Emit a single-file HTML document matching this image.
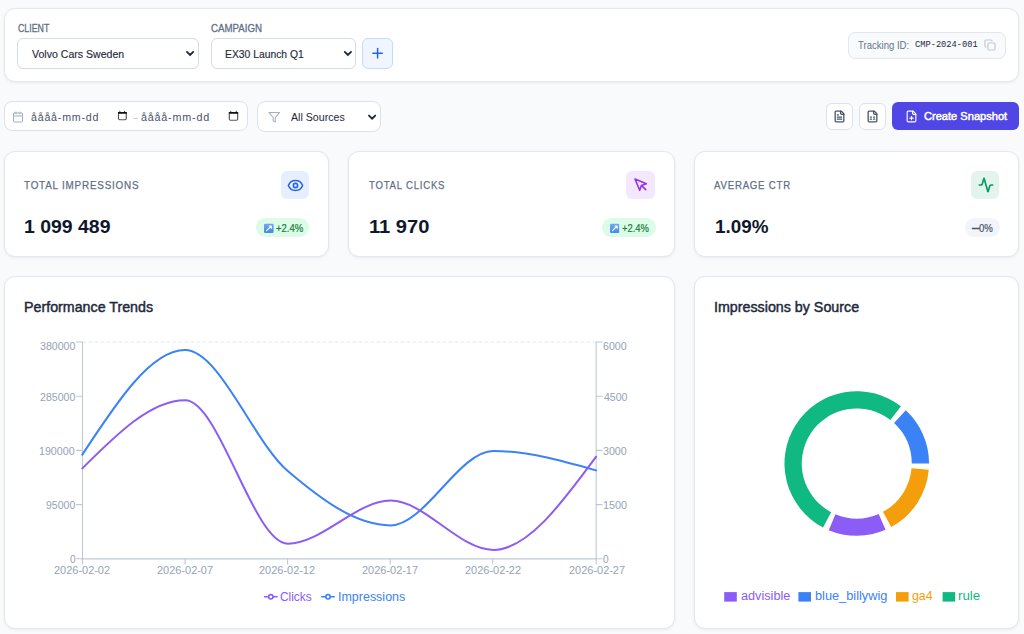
<!DOCTYPE html>
<html><head><meta charset="utf-8"><title>Campaign Dashboard</title>
<style>
*{box-sizing:border-box;margin:0;padding:0}
html,body{width:1024px;height:634px;overflow:hidden;background:#f8fafc;font-family:"Liberation Sans",sans-serif}
.a{position:absolute}
.tx{position:absolute;white-space:nowrap;transform-origin:0 0}
.card{position:absolute;background:#fff;border:1px solid #e2e8f0;border-radius:11px;box-shadow:0 1px 3px rgba(15,23,42,.06)}
svg.ic{position:absolute;overflow:visible;fill:none;stroke-linecap:round;stroke-linejoin:round}
</style></head><body>
<div class="shp">
<!-- Top card -->
<div class="card" style="left:4px;top:8px;width:1015px;height:74px"></div>
<div class="a" style="left:17px;top:38px;width:182px;height:31px;background:#fff;border:1px solid #d3dbe6;border-radius:6px"></div>
<div class="a" style="left:211px;top:38px;width:145px;height:31px;background:#fff;border:1px solid #d3dbe6;border-radius:6px"></div>
<div class="a" style="left:362px;top:38px;width:31px;height:31px;background:#eff6ff;border:1px solid #bfdbfe;border-radius:6px"></div>
<svg class="ic" style="left:0;top:0" width="1024" height="140" viewBox="0 0 1024 140">
  <g stroke="#2563eb" stroke-width="1.5" stroke-linecap="round">
    <line x1="372.9" y1="53.3" x2="382.3" y2="53.3"/>
    <line x1="377.6" y1="48.6" x2="377.6" y2="58.0"/>
  </g>
</svg>
<div class="a" style="left:848px;top:32px;width:158px;height:27px;background:#f8fafc;border:1px solid #e2e8f0;border-radius:7px"></div>
<svg class="ic" style="left:983.5px;top:39px" width="12" height="12" viewBox="0 0 24 24" stroke="#c2cad6" stroke-width="2.4">
  <rect width="14" height="14" x="8" y="8" rx="2" ry="2"/><path d="M4 16c-1.1 0-2-.9-2-2V4c0-1.1.9-2 2-2h10c1.1 0 2 .9 2 2"/>
</svg>

<!-- Row 2 -->
<div class="a" style="left:4px;top:101px;width:244px;height:30px;background:#fff;border:1px solid #dbe2ea;border-radius:8px"></div>
<svg class="ic" style="left:11.5px;top:111px" width="12" height="12" viewBox="0 0 24 24" stroke="#a3aec0" stroke-width="2">
  <path d="M8 2v4"/><path d="M16 2v4"/><rect width="18" height="18" x="3" y="4" rx="2"/><path d="M3 10h18"/>
</svg>
<svg class="ic" style="left:0;top:0" width="260" height="140" viewBox="0 0 260 140">
  <g stroke="#555" stroke-width="1.15" fill="none">
    <rect x="118.5" y="112.6" width="7.8" height="7.1" rx="1.2"/>
    <rect x="229.3" y="112.6" width="8.4" height="7.7" rx="1.2"/>
  </g>
  <g fill="#111">
    <rect x="118" y="112" width="8.8" height="1.7"/>
    <rect x="228.8" y="112" width="9.4" height="1.7"/>
    <path d="M119.2,112.2 L119.9,110.6 L120.6,112.2Z M123.9,112.2 L124.6,110.6 L125.3,112.2Z"/>
    <path d="M230.1,112.2 L230.8,110.4 L231.5,112.2Z M235.5,112.2 L236.2,110.4 L236.9,112.2Z"/>
  </g>
  <line x1="133.5" y1="118.5" x2="137.5" y2="118.5" stroke="#cbd5e1" stroke-width="1"/>
</svg>
<div class="a" style="left:257px;top:101px;width:124px;height:31px;background:#fff;border:1px solid #dbe2ea;border-radius:8px"></div>
<svg class="ic" style="left:267.6px;top:110.6px" width="12.5" height="12.5" viewBox="0 0 24 24" stroke="#a3aec0" stroke-width="2">
  <polygon points="22 3 2 3 10 12.46 10 19 14 21 14 12.46 22 3"/>
</svg>

<svg class="ic" style="left:0;top:0" width="400" height="140" viewBox="0 0 400 140">
  <g stroke="#1e293b" stroke-width="1.9" stroke-linecap="round" stroke-linejoin="miter">
    <polyline points="187.0,51.9 190.1,54.9 193.2,51.9"/>
    <polyline points="344.8,51.9 347.9,54.9 351.0,51.9"/>
    <polyline points="369.0,115.6 372.1,118.6 375.2,115.6"/>
  </g>
</svg>
<div class="a" style="left:826px;top:103px;width:27px;height:27px;background:#fff;border:1px solid #dbe2ea;border-radius:6px"></div>
<div class="a" style="left:859px;top:103px;width:27px;height:27px;background:#fff;border:1px solid #dbe2ea;border-radius:6px"></div>
<svg class="ic" style="left:832.6px;top:110.3px" width="13" height="13" viewBox="0 0 24 24" stroke="#475569" stroke-width="2.4">
  <path d="M15 2H6a2 2 0 0 0-2 2v16a2 2 0 0 0 2 2h12a2 2 0 0 0 2-2V7Z"/><path d="M14 2v4a2 2 0 0 0 2 2h4"/><path d="M10 9H8"/><path d="M16 13H8"/><path d="M16 17H8"/>
</svg>
<svg class="ic" style="left:866.4px;top:110.3px" width="13" height="13" viewBox="0 0 24 24" stroke="#475569" stroke-width="2.4">
  <path d="M15 2H6a2 2 0 0 0-2 2v16a2 2 0 0 0 2 2h12a2 2 0 0 0 2-2V7Z"/><path d="M14 2v4a2 2 0 0 0 2 2h4"/><path d="M8 13h2"/><path d="M14 13h2"/><path d="M8 17h2"/><path d="M14 17h2"/>
</svg>
<div class="a" style="left:892px;top:102px;width:127px;height:28px;background:#4f46e5;border-radius:6px"></div>
<svg class="ic" style="left:905.3px;top:110.2px" width="13" height="13" viewBox="0 0 24 24" stroke="#ffffff" stroke-width="2.1">
  <path d="M15 2H6a2 2 0 0 0-2 2v16a2 2 0 0 0 2 2h12a2 2 0 0 0 2-2V7Z"/><path d="M14 2v4a2 2 0 0 0 2 2h4"/><path d="M9 15h6"/><path d="M12 18v-6"/>
</svg>

<!-- Stat cards -->
<div class="card" style="left:4px;top:151px;width:325px;height:106px"></div>
<div class="card" style="left:348px;top:151px;width:327px;height:106px"></div>
<div class="card" style="left:694px;top:151px;width:325px;height:106px"></div>
<div class="a" style="left:281px;top:171px;width:28px;height:28px;background:#e7eefd;border-radius:6px"></div>
<div class="a" style="left:626px;top:171px;width:29px;height:28px;background:#f3e8fe;border-radius:6px"></div>
<div class="a" style="left:971px;top:171px;width:28px;height:28px;background:#e3f4ec;border-radius:6px"></div>
<svg class="ic" style="left:286.6px;top:177.0px" width="17" height="17" viewBox="0 0 24 24" stroke="#2563eb" stroke-width="2.2">
  <path d="M2.062 12.348a1 1 0 0 1 0-.696 10.75 10.75 0 0 1 19.876 0 1 1 0 0 1 0 .696 10.75 10.75 0 0 1-19.876 0"/><circle cx="12" cy="12" r="3"/>
</svg>
<svg class="ic" style="left:632.8px;top:177.3px" width="16" height="16" viewBox="0 0 24 24" stroke="#9333ea" stroke-width="2.4">
  <path d="m3 3 7.07 16.97 2.51-7.39 7.39-2.51L3 3z"/><path d="m13 13 6 6"/>
</svg>
<svg class="ic" style="left:978.0px;top:177.2px" width="16" height="16" viewBox="0 0 24 24" stroke="#059669" stroke-width="2.4">
  <path d="M22 12h-2.48a2 2 0 0 0-1.93 1.46l-2.35 8.36a.25.25 0 0 1-.48 0L9.24 2.18a.25.25 0 0 0-.48 0l-2.35 8.36A2 2 0 0 1 4.49 12H2"/>
</svg>
<div class="a" style="left:255.5px;top:218px;width:53.5px;height:19px;background:#dcfce7;border-radius:10px"></div>
<div class="a" style="left:601.5px;top:218px;width:54px;height:19px;background:#dcfce7;border-radius:10px"></div>
<div class="a" style="left:965px;top:218px;width:34.5px;height:19px;background:#f1f5f9;border-radius:10px"></div>
<svg class="ic" style="left:0;top:200px" width="1024" height="50" viewBox="0 200 1024 50">
  <defs><linearGradient id="eg" x1="0" y1="0" x2="0" y2="1"><stop offset="0" stop-color="#6aaaf8"/><stop offset="1" stop-color="#4a88ea"/></linearGradient></defs>
  <rect x="264" y="223.7" width="9.6" height="9.2" rx="1.2" fill="url(#eg)"/>
  <path d="M266.6,230.6 L271.2,226.2 M269.2,226.0 L271.4,226.0 L271.4,228.2" stroke="#fff" stroke-width="1.1" stroke-linecap="round"/>
  <line x1="972.4" y1="228.5" x2="979.2" y2="228.5" stroke="#475569" stroke-width="1.3"/>
  <rect x="610" y="223.7" width="9.2" height="9.2" rx="1.2" fill="url(#eg)"/>
  <path d="M612.5,230.6 L617,226.2 M615.0,226.0 L617.2,226.0 L617.2,228.2" stroke="#fff" stroke-width="1.1" stroke-linecap="round"/>
</svg>

<!-- Chart cards -->
<div class="card" style="left:4px;top:276px;width:671px;height:353px"></div>
<div class="card" style="left:694px;top:276px;width:325px;height:353px"></div>

<svg class="ic" style="left:0;top:0" width="1024" height="634" viewBox="0 0 1024 634" stroke-linecap="butt" stroke-linejoin="miter">
  <line x1="83" y1="342" x2="596" y2="342" stroke="#e4e8ee" stroke-dasharray="3 3"/>
  <g stroke="#bfc9d6" stroke-width="1.1">
    <line x1="82.5" y1="342" x2="82.5" y2="558.7"/>
    <line x1="82" y1="558.9" x2="596.5" y2="558.9"/>
    <line x1="596.2" y1="342" x2="596.2" y2="558.7"/>
    <line x1="76.5" y1="342" x2="82.5" y2="342"/>
    <line x1="76.5" y1="396.2" x2="82.5" y2="396.2"/>
    <line x1="76.5" y1="450.4" x2="82.5" y2="450.4"/>
    <line x1="76.5" y1="504.6" x2="82.5" y2="504.6"/>
    <line x1="76.5" y1="558.7" x2="82.5" y2="558.7"/>
    <line x1="596.2" y1="342" x2="602.2" y2="342"/>
    <line x1="596.2" y1="396.2" x2="602.2" y2="396.2"/>
    <line x1="596.2" y1="450.4" x2="602.2" y2="450.4"/>
    <line x1="596.2" y1="504.6" x2="602.2" y2="504.6"/>
    <line x1="596.2" y1="558.7" x2="602.2" y2="558.7"/>
    <line x1="82.5" y1="558.7" x2="82.5" y2="563.9"/>
    <line x1="185.1" y1="558.7" x2="185.1" y2="563.9"/>
    <line x1="287.6" y1="558.7" x2="287.6" y2="563.9"/>
    <line x1="390.2" y1="558.7" x2="390.2" y2="563.9"/>
    <line x1="492.7" y1="558.7" x2="492.7" y2="563.9"/>
    <line x1="596.2" y1="558.7" x2="596.2" y2="563.9"/>
  </g>
  <path d="M82.30,454.70C116.55,402.40,150.79,350.10,185.04,350.10C219.29,350.10,253.53,441.78,287.78,471.00C322.03,500.22,356.27,525.40,390.52,525.40C424.77,525.40,459.01,451.00,493.26,451.00C527.51,451.00,561.75,460.70,596.00,470.40" fill="none" stroke="#3b82f6" stroke-width="2"/>
  <path d="M82.30,468.40C116.55,434.35,150.79,400.30,185.04,400.30C219.29,400.30,253.53,543.70,287.78,543.70C322.03,543.70,356.27,500.60,390.52,500.60C424.77,500.60,459.01,549.90,493.26,549.90C527.51,549.90,561.75,503.40,596.00,456.90" fill="none" stroke="#8b5cf6" stroke-width="2"/>

  <g fill="none" stroke-width="1.6">
    <path stroke="#8b5cf6" d="M264.6,596.8H268.6A2.2,2.2,0,1,1,273.0,596.8H277.0M273.0,596.8A2.2,2.2,0,1,1,268.6,596.8"/>
    <path stroke="#3b82f6" d="M321.8,596.8H325.8A2.2,2.2,0,1,1,330.2,596.8H334.2M330.2,596.8A2.2,2.2,0,1,1,325.8,596.8"/>
  </g>

  <path fill="#3b82f6" stroke="none" d="M929.05,463.50A72.3,72.3,0,0,0,905.78,410.37L894.05,423.08A55.0,55.0,0,0,1,911.75,463.50Z"/>
  <path fill="#10b981" stroke="none" d="M900.96,406.29A72.3,72.3,0,1,0,823.03,527.46L831.10,512.15A55.0,55.0,0,1,1,890.38,419.98Z"/>
  <path fill="#8b5cf6" stroke="none" d="M828.73,530.15A72.3,72.3,0,0,0,885.58,529.80L878.68,513.94A55.0,55.0,0,0,1,835.44,514.20Z"/>
  <path fill="#f59e0b" stroke="none" d="M891.25,527.04A72.3,72.3,0,0,0,928.77,469.80L911.54,468.29A55.0,55.0,0,0,1,882.99,511.83Z"/>

  <g stroke="none">
    <rect x="724.2" y="592.1" width="12.6" height="9.5" fill="#8b5cf6"/>
    <rect x="798.4" y="592.1" width="12.6" height="9.5" fill="#3b82f6"/>
    <rect x="896" y="592.1" width="12.6" height="9.5" fill="#f59e0b"/>
    <rect x="942.6" y="592.1" width="12.6" height="9.5" fill="#10b981"/>
  </g>
</svg>

</div>
<div class="tx" id="client" style="left:17.52px;top:21.29px;font-size:10.90px;line-height:14px;font-weight:normal;color:#5f6f85;transform:scaleX(0.8094);-webkit-text-stroke:.3px #5f6f85;">CLIENT</div>
<div class="tx" id="campaign" style="left:211.33px;top:21.29px;font-size:10.90px;line-height:14px;font-weight:normal;color:#5f6f85;transform:scaleX(0.8896);-webkit-text-stroke:.3px #5f6f85;">CAMPAIGN</div>
<div class="tx" id="volvo" style="left:32.14px;top:46.24px;font-size:11.60px;line-height:15px;font-weight:normal;color:#1e293b;transform:scaleX(0.9105);-webkit-text-stroke:.15px #1e293b;">Volvo Cars Sweden</div>
<div class="tx" id="ex30" style="left:225.22px;top:46.24px;font-size:11.60px;line-height:15px;font-weight:normal;color:#1e293b;transform:scaleX(0.8922);-webkit-text-stroke:.15px #1e293b;">EX30 Launch Q1</div>
<div class="tx" id="trk" style="left:858.02px;top:38.43px;font-size:10.50px;line-height:14px;font-weight:normal;color:#64748b;transform:scaleX(0.9106);">Tracking ID:</div>
<div class="tx" id="cmp" style="left:914.63px;top:38.84px;font-size:9.60px;line-height:12px;font-weight:normal;color:#1e293b;transform:scaleX(0.9073);font-family:'Liberation Mono',monospace;">CMP-2024-001</div>
<div class="tx" id="src" style="left:291.15px;top:109.77px;font-size:11.50px;line-height:15px;font-weight:normal;color:#1e293b;transform:scaleX(0.9232);">All Sources</div>
<div class="tx" id="snap" style="left:923.86px;top:108.75px;font-size:11.30px;line-height:15px;font-weight:normal;color:#ffffff;transform:scaleX(0.9809);-webkit-text-stroke:.5px #fff;">Create Snapshot</div>
<div class="tx" id="l1" style="left:24.16px;top:177.61px;font-size:11.40px;line-height:15px;font-weight:normal;color:#5f6f85;transform:scaleX(0.8686);letter-spacing:.9px;-webkit-text-stroke:.25px #5f6f85;">TOTAL IMPRESSIONS</div>
<div class="tx" id="l2" style="left:369.00px;top:177.61px;font-size:11.40px;line-height:15px;font-weight:normal;color:#5f6f85;transform:scaleX(0.8438);letter-spacing:.9px;-webkit-text-stroke:.25px #5f6f85;">TOTAL CLICKS</div>
<div class="tx" id="l3" style="left:713.71px;top:177.61px;font-size:11.40px;line-height:15px;font-weight:normal;color:#5f6f85;transform:scaleX(0.8477);letter-spacing:.9px;-webkit-text-stroke:.25px #5f6f85;">AVERAGE CTR</div>
<div class="tx" id="v1" style="left:24.38px;top:213.73px;font-size:19.20px;line-height:25px;font-weight:bold;color:#0f172a;transform:scaleX(1.0131);">1 099 489</div>
<div class="tx" id="v2" style="left:368.65px;top:213.73px;font-size:19.20px;line-height:25px;font-weight:bold;color:#0f172a;transform:scaleX(1.0475);">11 970</div>
<div class="tx" id="v3" style="left:714.72px;top:213.73px;font-size:19.20px;line-height:25px;font-weight:bold;color:#0f172a;transform:scaleX(0.9820);">1.09%</div>
<div class="tx" id="b1" style="left:276.08px;top:221.80px;font-size:10.30px;line-height:13px;font-weight:normal;color:#15803d;transform:scaleX(0.9233);-webkit-text-stroke:.2px #15803d;">+2.4%</div>
<div class="tx" id="b2" style="left:622.23px;top:221.80px;font-size:10.30px;line-height:13px;font-weight:normal;color:#15803d;transform:scaleX(0.9131);-webkit-text-stroke:.2px #15803d;">+2.4%</div>
<div class="tx" id="b3" style="left:979.11px;top:221.80px;font-size:10.30px;line-height:13px;font-weight:normal;color:#475569;transform:scaleX(0.9318);-webkit-text-stroke:.2px #475569;">0%</div>
<div class="tx" id="t1" style="left:23.66px;top:297.76px;font-size:14.40px;line-height:19px;font-weight:normal;color:#1e293b;transform:scaleX(0.9902);-webkit-text-stroke:.45px #1e293b;">Performance Trends</div>
<div class="tx" id="t2" style="left:713.72px;top:297.76px;font-size:14.40px;line-height:19px;font-weight:normal;color:#1e293b;transform:scaleX(0.9911);-webkit-text-stroke:.45px #1e293b;">Impressions by Source</div>
<div class="tx" id="lg1" style="left:280.46px;top:588.50px;font-size:12.30px;line-height:16px;font-weight:normal;color:#8b5cf6;transform:scaleX(0.9657);">Clicks</div>
<div class="tx" id="lg2" style="left:337.99px;top:588.50px;font-size:12.30px;line-height:16px;font-weight:normal;color:#3b82f6;transform:scaleX(1.0143);">Impressions</div>
<div class="tx" id="pl1" style="left:740.54px;top:588.40px;font-size:12.30px;line-height:16px;font-weight:normal;color:#8b5cf6;transform:scaleX(1.0306);">advisible</div>
<div class="tx" id="pl2" style="left:814.53px;top:588.40px;font-size:12.30px;line-height:16px;font-weight:normal;color:#3b82f6;transform:scaleX(1.0371);">blue_billywig</div>
<div class="tx" id="pl3" style="left:912.00px;top:588.40px;font-size:12.30px;line-height:16px;font-weight:normal;color:#f59e0b;transform:scaleX(1.0025);">ga4</div>
<div class="tx" id="pl4" style="left:958.08px;top:588.40px;font-size:12.30px;line-height:16px;font-weight:normal;color:#10b981;transform:scaleX(1.0857);">rule</div>
<div class="tx" id="yl380000" style="left:39.71px;top:338.83px;font-size:10.90px;line-height:14px;font-weight:normal;color:#94a3b8;transform:scaleX(0.9718);">380000</div>
<div class="tx" id="yl285000" style="left:39.71px;top:389.54px;font-size:10.90px;line-height:14px;font-weight:normal;color:#94a3b8;transform:scaleX(0.9718);">285000</div>
<div class="tx" id="yl190000" style="left:39.46px;top:443.69px;font-size:10.90px;line-height:14px;font-weight:normal;color:#94a3b8;transform:scaleX(0.9786);">190000</div>
<div class="tx" id="yl95000" style="left:45.71px;top:497.79px;font-size:10.90px;line-height:14px;font-weight:normal;color:#94a3b8;transform:scaleX(0.9661);">95000</div>
<div class="tx" id="yl0" style="left:69.77px;top:551.63px;font-size:10.90px;line-height:14px;font-weight:normal;color:#94a3b8;transform:scaleX(0.9292);">0</div>
<div class="tx" id="yr6000" style="left:603.46px;top:338.83px;font-size:10.90px;line-height:14px;font-weight:normal;color:#94a3b8;transform:scaleX(0.9786);">6000</div>
<div class="tx" id="yr4500" style="left:603.71px;top:389.54px;font-size:10.90px;line-height:14px;font-weight:normal;color:#94a3b8;transform:scaleX(0.9684);">4500</div>
<div class="tx" id="yr3000" style="left:602.71px;top:443.69px;font-size:10.90px;line-height:14px;font-weight:normal;color:#94a3b8;transform:scaleX(0.9787);">3000</div>
<div class="tx" id="yr1500" style="left:602.96px;top:497.79px;font-size:10.90px;line-height:14px;font-weight:normal;color:#94a3b8;transform:scaleX(0.9892);">1500</div>
<div class="tx" id="yr0" style="left:603.46px;top:551.63px;font-size:10.90px;line-height:14px;font-weight:normal;color:#94a3b8;transform:scaleX(0.9292);">0</div>
<div class="tx" id="xl02" style="left:53.84px;top:563.38px;font-size:10.90px;line-height:14px;font-weight:normal;color:#94a3b8;transform:scaleX(1.0064);">2026-02-02</div>
<div class="tx" id="xl07" style="left:157.14px;top:563.38px;font-size:10.90px;line-height:14px;font-weight:normal;color:#94a3b8;transform:scaleX(1.0064);">2026-02-07</div>
<div class="tx" id="xl12" style="left:259.15px;top:563.38px;font-size:10.90px;line-height:14px;font-weight:normal;color:#94a3b8;transform:scaleX(1.0064);">2026-02-12</div>
<div class="tx" id="xl17" style="left:361.85px;top:563.38px;font-size:10.90px;line-height:14px;font-weight:normal;color:#94a3b8;transform:scaleX(1.0064);">2026-02-17</div>
<div class="tx" id="xl22" style="left:464.54px;top:563.38px;font-size:10.90px;line-height:14px;font-weight:normal;color:#94a3b8;transform:scaleX(1.0064);">2026-02-22</div>
<div class="tx" id="xl27" style="left:568.55px;top:563.38px;font-size:10.90px;line-height:14px;font-weight:normal;color:#94a3b8;transform:scaleX(1.0064);">2026-02-27</div>
<div class="tx" id="d1" style="left:30.56px;top:109.55px;font-size:11.00px;line-height:14px;font-weight:normal;color:#475569;transform:scaleX(0.9690);letter-spacing:.8px;">åååå-mm-dd</div>
<div class="tx" id="d2" style="left:141.01px;top:109.55px;font-size:11.00px;line-height:14px;font-weight:normal;color:#475569;transform:scaleX(0.9799);letter-spacing:.8px;">åååå-mm-dd</div>
</body></html>
